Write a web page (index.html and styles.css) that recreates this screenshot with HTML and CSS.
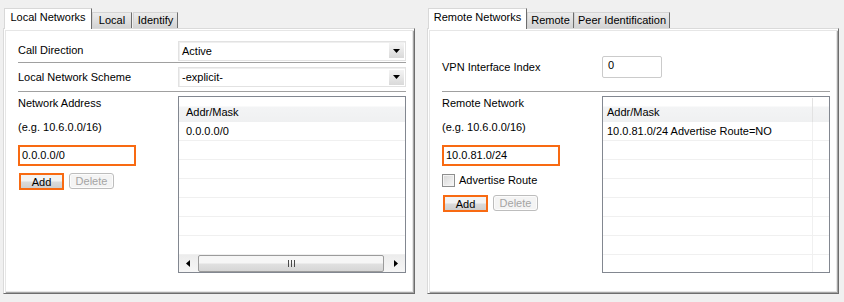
FILE: index.html
```html
<!DOCTYPE html>
<html lang="en">
<head>
  <meta charset="UTF-8">
  <title>Network settings</title>
  <link rel="stylesheet" href="styles.css">
</head>
<body>
  <div class="screen">

    <div class="tabctl">
      <div class="tabs">
        <div class="tab active w-88">Local Networks</div>
        <div class="tab w-40">Local</div>
        <div class="tab w-45">Identify</div>
      </div>
      <div class="tab-body">
        <div class="form-row">
          <span class="label">Call Direction</span>
          <div class="combo">
            <span class="combo-text">Active</span>
            <span class="combo-btn"><svg width="7" height="4" viewBox="0 0 7 4"><path d="M0 0h7L3.5 4z" fill="#000"/></svg></span>
          </div>
        </div>
        <div class="form-row row-tall">
          <span class="label">Local Network Scheme</span>
          <div class="combo">
            <span class="combo-text">-explicit-</span>
            <span class="combo-btn"><svg width="7" height="4" viewBox="0 0 7 4"><path d="M0 0h7L3.5 4z" fill="#000"/></svg></span>
          </div>
        </div>

        <div class="section">
          <div class="side">
            <div class="label">Network Address</div>
            <div class="hint">(e.g. 10.6.0.0/16)</div>
            <div class="entry">0.0.0.0/0</div>
            <div class="buttons">
              <button class="btn btn-focus">Add</button>
              <button class="btn" disabled>Delete</button>
            </div>
          </div>
          <div class="listview">
            <div class="lv-head"><span class="lv-cell">Addr/Mask</span></div>
            <div class="lv-rows">
              <div class="lv-row"><span class="lv-cell">0.0.0.0/0</span></div>
              <div class="lv-row"></div>
              <div class="lv-row"></div>
              <div class="lv-row"></div>
              <div class="lv-row"></div>
              <div class="lv-row"></div>
              <div class="lv-row"></div>
            </div>
            <div class="hscroll">
              <span class="sb-arrow"><svg width="4" height="7" viewBox="0 0 4 7"><path d="M4 0v7L0 3.5z" fill="#000"/></svg></span>
              <span class="sb-track">
                <span class="sb-thumb"><svg width="8" height="7" viewBox="0 0 8 7"><path d="M1.5 0v7M4.5 0v7M7.5 0v7" stroke="#4a4a4a"/></svg></span>
              </span>
              <span class="sb-arrow"><svg width="4" height="7" viewBox="0 0 4 7"><path d="M0 0v7L4 3.5z" fill="#000"/></svg></span>
            </div>
          </div>
        </div>
      </div>
    </div>

    <div class="tabctl">
      <div class="tabs">
        <div class="tab active w-99">Remote Networks</div>
        <div class="tab w-47">Remote</div>
        <div class="tab w-96">Peer Identification</div>
      </div>
      <div class="tab-body">
        <div class="form-row row-index">
          <span class="label">VPN Interface Index</span>
          <div class="textbox">0</div>
        </div>

        <div class="section">
          <div class="side">
            <div class="label">Remote Network</div>
            <div class="hint">(e.g. 10.6.0.0/16)</div>
            <div class="entry">10.0.81.0/24</div>
            <label class="check"><span class="check-box"></span>Advertise Route</label>
            <div class="buttons">
              <button class="btn btn-focus">Add</button>
              <button class="btn" disabled>Delete</button>
            </div>
          </div>
          <div class="listview lv-compact">
            <div class="lv-head"><span class="lv-cell">Addr/Mask</span><span class="lv-pad"></span></div>
            <div class="lv-rows">
              <div class="lv-row"><span class="lv-cell">10.0.81.0/24 Advertise Route=NO</span><span class="lv-pad"></span></div>
              <div class="lv-row"><span class="lv-cell"></span><span class="lv-pad"></span></div>
              <div class="lv-row"><span class="lv-cell"></span><span class="lv-pad"></span></div>
              <div class="lv-row"><span class="lv-cell"></span><span class="lv-pad"></span></div>
              <div class="lv-row"><span class="lv-cell"></span><span class="lv-pad"></span></div>
              <div class="lv-row"><span class="lv-cell"></span><span class="lv-pad"></span></div>
              <div class="lv-row"><span class="lv-cell"></span><span class="lv-pad"></span></div>
              <div class="lv-row"><span class="lv-cell"></span><span class="lv-pad"></span></div>
            </div>
          </div>
        </div>
      </div>
    </div>

  </div>
</body>
</html>
```

FILE: styles.css
```css
* {
  box-sizing: border-box;
}
body {
  margin: 0;
  background: #f0f0f0;
  font-family: "Liberation Sans", Arial, sans-serif;
  font-size: 11px;
  color: #000;
}
.screen {
  display: flex;
  gap: 12px;
  padding: 8px 0 0 3px;
}
.tabctl {
  width: 412px;
}

/* tab strip */
.tabs {
  display: flex;
  align-items: flex-end;
  height: 20px;
  padding-left: 1px;
}
.tab {
  height: 16px;
  line-height: 14px;
  padding: 0;
  text-align: center;
  background: linear-gradient(#ececec, #d3d3d3);
  border: 1px solid #d4d4d4;
  border-right-color: #6d6d6d;
  border-bottom: none;
  white-space: nowrap;
}
.tab.active {
  position: relative;
  z-index: 1;
  height: 21px;
  margin-bottom: -1px;
  padding-top: 2px;
  line-height: 13px;
  background: #fff;
  border-color: #d8d8d8;
  border-right-color: #6d6d6d;
}
.w-40 { width: 40px; }
.w-45 { width: 45px; margin-left: 1px; }
.w-47 { width: 47px; }
.w-88 { width: 88px; }
.w-96 { width: 96px; }
.w-99 { width: 99px; }

.tab-body {
  height: 266px;
  background: #fff;
  border: 1px solid #dadada;
  border-right-color: #6d6d6d;
  border-bottom-color: #6d6d6d;
  box-shadow: inset 1px 1px 0 #fff, inset 2px 2px 0 #e6e6e6, inset -1px -1px 0 #a5a5a5, inset -2px -2px 0 #e6e6e6;
  padding: 10px 8px 0 14px;
}

/* rows */
.form-row {
  display: flex;
  align-items: center;
  height: 24px;
  border-bottom: 1px solid #a0a0a0;
}
.form-row.row-tall {
  height: 29px;
}
.form-row.row-index {
  height: 49px;
  margin-top: 4px;
}
.form-row .label {
  width: 160px;
  flex: none;
}
.label, .hint {
  line-height: 13px;
}
.section .label {
  padding-top: 1px;
}
.combo {
  flex: 1;
  height: 20px;
  display: flex;
  align-items: center;
  padding-left: 3px;
  border: 1px solid #e2e2e2;
  box-shadow: inset 1px 1px 0 #efefef;
}
.combo-text {
  flex: 1;
}
.combo-btn {
  width: 15px;
  height: 15px;
  margin-right: 1px;
  display: flex;
  align-items: center;
  justify-content: center;
  background: linear-gradient(#f4f4f4, #d9d9d9);
}
.textbox {
  width: 60px;
  height: 22px;
  padding: 2px 0 0 5px;
  line-height: 13px;
  border: 1px solid #cbcbcb;
  border-radius: 2px;
}

/* lower section */
.section {
  display: flex;
  margin-top: 4px;
}
.side {
  width: 160px;
  flex: none;
}
.hint {
  margin-top: 11px;
}
.entry {
  width: 118px;
  height: 21px;
  margin-top: 11px;
  padding-left: 2px;
  line-height: 16px;
  border: 2px solid #f86a12;
}
.buttons {
  display: flex;
  gap: 5px;
  margin-top: 7px;
  padding-left: 1px;
}
.btn {
  width: 45px;
  height: 16px;
  padding: 0;
  font: inherit;
  line-height: 12px;
  color: #a4a4a4;
  background: #f4f4f4;
  border: 1px solid #bdbdbd;
  border-radius: 3px;
  box-shadow: inset 0 0 0 1px #fcfcfc;
}
.btn.btn-focus {
  height: 17px;
  color: #000;
  border: 2px solid #f86a12;
  border-radius: 0;
  background: linear-gradient(#f3f3f3 45%, #dadada 55%, #cfcfcf);
  box-shadow: none;
}
.check {
  display: flex;
  align-items: center;
  gap: 4px;
  height: 13px;
  margin-top: 8px;
  line-height: 13px;
}
.check-box {
  width: 13px;
  height: 13px;
  border: 1px solid #8e8f8f;
  background: linear-gradient(135deg, #d6d6d6, #f8f8f8);
  box-shadow: inset 0 0 0 1px #f4f4f4;
}
.check + .buttons {
  margin-top: 8px;
}

/* list view */
.listview {
  flex: 1;
  height: 177px;
  display: flex;
  flex-direction: column;
  background: #fff;
  border: 1px solid #828790;
}
.lv-head {
  height: 25px;
  flex: none;
  display: flex;
  padding-top: 9px;
  line-height: 13px;
  background: linear-gradient(#fff 9px, #f3f4f5 10px, #eff0f1);
}
.lv-rows {
  flex: 1;
  overflow: hidden;
}
.lv-row {
  height: 19px;
  display: flex;
  line-height: 18px;
  border-bottom: 1px solid #f0f0f0;
}
.lv-cell {
  flex: 1;
  padding-left: 7px;
  white-space: nowrap;
}
.lv-compact .lv-cell {
  padding-left: 4px;
}
.lv-pad {
  width: 17px;
  flex: none;
  border-left: 1px solid #f0f0f0;
}
.lv-head .lv-pad {
  margin-top: -8px;
  border-left-color: #e2e2e2;
}

/* horizontal scrollbar */
.hscroll {
  height: 17px;
  flex: none;
  display: flex;
  background: linear-gradient(#ececec, #f6f6f6);
}
.sb-arrow {
  width: 18px;
  display: flex;
  align-items: center;
  justify-content: center;
}
.sb-track {
  flex: 1;
  display: flex;
  padding: 0 3px 0 1px;
}
.sb-thumb {
  flex: 1;
  display: flex;
  align-items: center;
  justify-content: center;
  border: 1px solid #9b9b9b;
  border-radius: 2px;
  background: linear-gradient(#f6f6f6 45%, #e0e0e0 55%, #d6d6d6);
}
```
